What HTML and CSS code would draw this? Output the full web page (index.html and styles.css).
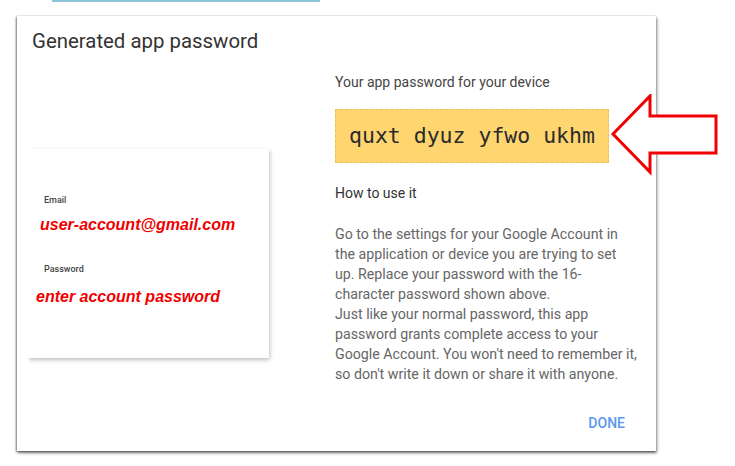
FILE: index.html
```html
<!DOCTYPE html>
<html>
<head>
<meta charset="utf-8">
<link rel="stylesheet" href="styles.css">
</head>
<body>
<div class="topbar"></div>
<div class="dialog">
  <div class="title">Generated app password</div>
  <div class="content">
    <div class="left">
      <div class="card">
        <div class="field-label label-email">Email</div>
        <div class="red-value value-email">user-account@gmail.com</div>
        <div class="field-label label-pass">Password</div>
        <div class="red-value value-pass">enter account password</div>
      </div>
    </div>
    <div class="right">
      <div class="device-label">Your app password for your device</div>
      <div class="pwbox">quxt dyuz yfwo ukhm</div>
      <div class="howto">How to use it</div>
      <div class="para">Go to the settings for your Google Account in<br>the application or device you are trying to set<br>up. Replace your password with the 16-<br>character password shown above.<br>Just like your normal password, this app<br>password grants complete access to your<br>Google Account. You won't need to remember it,<br>so don't write it down or share it with anyone.</div>
    </div>
  </div>
  <div class="footer"><span class="done">DONE</span></div>
</div>
<svg class="arrow" width="112" height="84" viewBox="0 0 112 84">
  <polygon points="3,40 40,2 40,22 106,22 106,59 40,59 40,78" fill="#fff" stroke="#f00000" stroke-width="3" stroke-linejoin="miter"/>
</svg>
</body>
</html>
```
FILE: styles.css
```css
html, body {
  margin: 0;
  padding: 0;
  background: #fff;
  width: 735px;
  height: 466px;
  overflow: hidden;
  font-family: Roboto, "Liberation Sans", sans-serif;
}
.topbar {
  margin-left: 52px;
  width: 268px;
  height: 2px;
  background: #8cc3d8;
}
.dialog {
  margin: 14px 0 0 17px;
  width: 639px;
  height: 435px;
  background: #fff;
  box-shadow: 0 0 1px rgba(0,0,0,0.25), -1px 1px 2px rgba(0,0,0,0.45), 1px 2px 3px rgba(0,0,0,0.45);
  display: flex;
  flex-direction: column;
  box-sizing: border-box;
}
.title {
  padding: 11px 0 0 15px;
  font-size: 20.4px;
  line-height: 28px;
  color: #333;
}
.content {
  flex: 1;
  display: flex;
}
.left {
  width: 318px;
}
.card {
  margin: 94px 0 0 11px;
  width: 241px;
  height: 209px;
  box-sizing: border-box;
  background: #fff;
  box-shadow: 1px 2px 4px rgba(0,0,0,0.25);
  clip-path: inset(-10px -10px -10px 0);
  padding-top: 45px;
}
.field-label {
  font-size: 9px;
  line-height: 12px;
  font-weight: 500;
  color: #444;
  margin-left: 16px;
}
.red-value {
  font-family: "Liberation Sans", Arial, sans-serif;
  font-weight: bold;
  font-style: italic;
  font-size: 16px;
  line-height: 20px;
  color: #f00000;
}
.value-email { margin: 9px 0 0 12px; }
.label-pass { margin-top: 28px; }
.value-pass { margin: 12px 0 0 8px; }
.right {
  width: 310px;
  padding-top: 17px;
}
.device-label {
  font-size: 14px;
  line-height: 20px;
  color: #444;
}
.pwbox {
  margin-top: 17px;
  width: 274px;
  height: 54px;
  box-sizing: border-box;
  background: #fed56f;
  border: 1px dashed #efc060;
  display: flex;
  align-items: center;
  justify-content: center;
  font-family: "DejaVu Sans Mono", monospace;
  font-size: 21.5px;
  line-height: 52px;
  color: #2b2b2b;
}
.howto {
  margin-top: 20px;
  font-size: 14px;
  line-height: 20px;
  color: #333;
}
.para {
  margin-top: 21px;
  font-size: 14.2px;
  line-height: 20px;
  color: #666;
  white-space: nowrap;
}
.footer {
  display: flex;
  justify-content: flex-end;
  padding: 0 31px 18px 0;
}
.done {
  font-size: 14px;
  line-height: 20px;
  font-weight: 500;
  color: #5a98f0;
}
.arrow {
  position: absolute;
  left: 610px;
  top: 94px;
}
```
